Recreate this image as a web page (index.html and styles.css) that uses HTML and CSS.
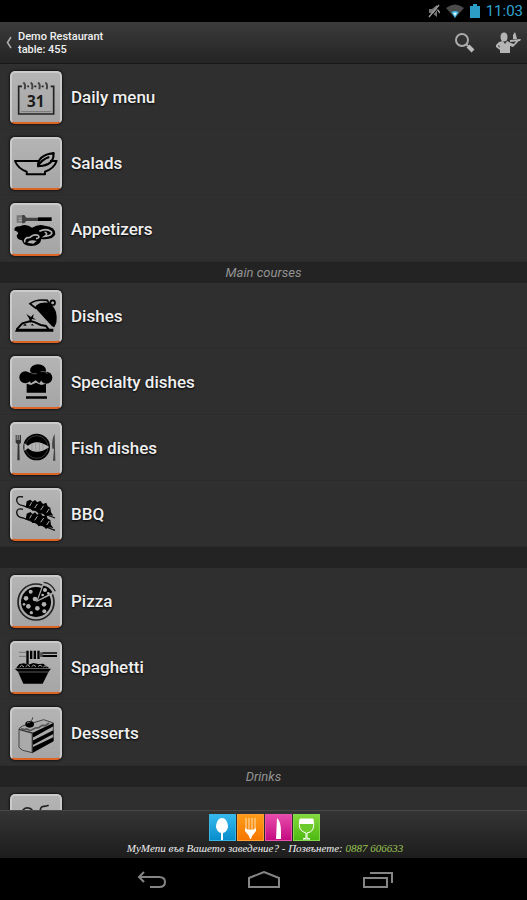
FILE: index.html
```html
<!DOCTYPE html>
<html lang="en">
<head>
<meta charset="utf-8">
<meta name="viewport" content="width=device-width, initial-scale=1">
<title>Demo Restaurant</title>
<link rel="stylesheet" href="styles.css">
</head>
<body>
<div class="status">
  <svg width="12" height="14" viewBox="0 0 12 14" aria-hidden="true"><path d="M1 5h3l5-4v12L4 9H1z" fill="#777"/><path d="M1 13L11 1M9 5l3 4" stroke="#999" stroke-width="1.5"/><path d="M2 14L12 2" stroke="#000"/></svg>
  <svg width="18" height="14" viewBox="0 0 18 14" aria-hidden="true"><path d="M0 4Q9-3 18 4L9 14z" fill="#4b4b4b"/><path d="M5.500 8Q9 6 12.500 8L9 14z" fill="#33b5e5"/><path d="M7 9Q9 8 11 9L9 12z" fill="#e0f6ff"/></svg>
  <svg width="10" height="14" viewBox="0 0 10 14" aria-hidden="true"><path d="M3 0h4v2h3v12H0V2h3z" fill="#2c9dc7"/></svg>
  <time class="clock">11:03</time>
</div>
<header class="bar">
  <a class="up" href="#">
    <svg width="6" height="13" viewBox="0 0 6 13" aria-hidden="true"><path d="M5 1L1.500 6.500L5 12" fill="none" stroke="#aaa" stroke-width="1.600"/></svg>
    <span class="title">Demo Restaurant<br>table: 455</span>
  </a>
  <button class="action" type="button" aria-label="Search">
    <svg width="22" height="22" viewBox="0 0 22 22"><circle cx="8" cy="8" r="6" fill="none" stroke="#aaa" stroke-width="2"/><path d="M12 12l2 2" stroke="#aaa" stroke-width="2"/><path d="M14 14l5 5" stroke="#bbb" stroke-width="4"/></svg>
  </button>
  <button class="action" type="button" aria-label="Call waiter">
    <svg width="26" height="24" viewBox="0 0 26 24" fill="#b5b5b5"><ellipse cx="9" cy="6" rx="3.500" ry="4.500"/><path d="M4 11L8 10L10 13L12 10L16 12L19 13L21 10L25 8L22 12L18 16L15 15L15 22H5V19L1 16L1 14zM4 14L3 15L5 17z" fill-rule="evenodd"/><path d="M15 9L26 8L25 10L15 11zM18 8V4L20 1L21 4L22 8z"/></svg>
  </button>
</header>
<main class="list">
  <a class="row" href="#"><span class="tile"><svg viewBox="0 0 156 156"><g fill="none" stroke="#222" stroke-width="5"><path d="M36 46H26V129H131V46H122M52 46h5M73 46h6M95 46h6" /><path d="M33 122H124" stroke="#777" stroke-width="3"/><path d="M40 35q8 5 4 20M62 35q8 5 4 20M84 35q8 5 4 20M106 35q8 5 4 20" stroke-width="6" stroke="#444"/></g><text class="date" x="77" y="108">31</text></svg></span>Daily menu</a>
  <a class="row" href="#"><span class="tile"><svg viewBox="0 0 156 156"><g fill="none" stroke="#000" stroke-width="6" stroke-linejoin="round"><path d="M86 72H15Q24 95 50 104V112H105V104Q132 95 140 72H120"/><path d="M84 88Q82 55 131 48Q132 82 98 86ZM84 88Q96 66 118 60"/></g></svg></span>Salads</a>
  <a class="row" href="#"><span class="tile"><svg viewBox="0 0 156 156"><path d="M20 37h18v7H26v3h12v4H26v3h12v5H20z" fill="#777"/><path d="M36 36h7l6 8h36v10H49l-6 7h-7z" fill="#444"/><path d="M84 43h41v11H84z"/><path d="M13 82Q13 68 30 70Q48 60 66 74Q86 62 104 68Q138 72 136 94Q128 112 94 108Q92 128 64 129Q40 130 36 112Q20 110 20 97Q32 90 13 82z"/><g fill="none" stroke="#b1b1b1" stroke-width="5"><path d="M44 118Q42 103 60 103Q70 92 84 97Q92 104 78 107M88 85Q108 74 124 86Q130 98 104 100Q116 92 104 87"/></g><path d="M52 119Q60 108 80 114L70 122z" fill="#b1b1b1"/></svg></span>Appetizers</a>
  <h2 class="section">Main courses</h2>
  <a class="row" href="#"><span class="tile"><svg viewBox="0 0 156 156"><path d="M15 125L19 116H130V125z"/><path d="M20 118L37 100L62 93L75 97L92 105L108 108L116 119" fill="none" stroke="#000" stroke-width="6"/><path d="M49 72l14 9l8-9l-2 11l9 6l-12-2l-4 13l-5-15zM38 106l8-5l4 7zM62 106l5-5l5 6z"/><path d="M60 41Q78 27 112 31L117 40Q82 40 76 54z" fill="#aaa" stroke="#000" stroke-width="5"/><path d="M76 54Q83 34 116 39Q145 55 139 98L133 112L126 109z"/><circle cx="128" cy="38" r="7" fill="#aaa" stroke="#000" stroke-width="5"/></svg></span>Dishes</a>
  <a class="row" href="#"><span class="tile"><svg viewBox="0 0 156 156"><circle cx="46" cy="64" r="18"/><ellipse cx="84" cy="43" rx="24" ry="18"/><circle cx="109" cy="65" r="18"/><path d="M46 50H110L88 82L77 73L63 82z"/><path d="M60 48Q66 56 80 53M92 47Q110 45 112 54" fill="none" stroke="#888" stroke-width="2"/><path d="M50 83L63 87L78 80L94 87L108 83V110H50zM48 121H111V128H48z"/></svg></span>Specialty dishes</a>
  <a class="row" href="#"><span class="tile"><svg viewBox="0 0 156 156"><circle cx="80" cy="75" r="40"/><circle cx="80" cy="75" r="34" fill="none" stroke="#555" stroke-width="2"/><path d="M43 64L54 71Q80 48 118 75Q80 102 54 79L43 87z" fill="#b4b4b4"/><path d="M66 65v20M77 61v28M88 62v26M99 66v18" stroke="#999" stroke-width="3"/><path d="M17 39h3v15h3V39h3v15h3V39h4v23l-5 5l1 48h-7l1-48l-6-5z" fill="#333"/><path d="M134 36q-10 16-7 44h5l-3 36h7z" fill="#444"/></svg></span>Fish dishes</a>
  <a class="row" href="#"><span class="tile"><svg viewBox="0 0 156 156"><g id="skewer"><path d="M39 27q-18-5-19 9q1 15 19 17L135 90" fill="none" stroke="#111" stroke-width="4"/><path d="M50 40l11-5l7 6l7-5l7 7l9-5l8 10l10-4l4 11l8 4l2 14l7 10l-15-2l-7 5l-11-11l-11 3l-9-11l-10 1l-6-9l-14-1z"/><path d="M65 43l-6 11M82 48l-8 12M101 53l-9 13M118 62l-8 12" stroke="#aaa" stroke-width="3"/></g><use href="#skewer" y="37"/></svg></span>BBQ</a>
  <h2 class="section"></h2>
  <a class="row" href="#"><span class="tile"><svg viewBox="0 0 156 156"><circle cx="78" cy="81" r="54" fill="none" stroke="#222" stroke-width="5"/><circle cx="78" cy="81" r="45"/><g fill="#b1b1b1"><circle cx="62" cy="50" r="6"/><circle cx="48" cy="70" r="7"/><circle cx="75" cy="72" r="7"/><circle cx="55" cy="94" r="7"/><circle cx="82" cy="100" r="7"/><circle cx="64" cy="113" r="5"/><circle cx="102" cy="88" r="7"/><circle cx="103" cy="109" r="6"/><circle cx="42" cy="88" r="4"/></g><path d="M78 82L98 26L136 54z" fill="#aaa"/><path d="M84 75L100 32Q118 34 127 52z"/><path d="M101 22Q124 24 136 49" fill="none" stroke="#222" stroke-width="4"/><circle cx="105" cy="45" r="6" fill="#bbb"/><circle cx="115" cy="55" r="4" fill="#bbb"/><circle cx="98" cy="60" r="4" fill="#bbb"/></svg></span>Pizza</a>
  <a class="row" href="#"><span class="tile"><svg viewBox="0 0 156 156"><path d="M27 34h22M27 46h22" stroke="#777" stroke-width="3"/><path d="M49 29h7v42h-7zM60 29h7v25h-7zM71 29h7v25h-7zM82 29h7v25h-7z"/><path d="M89 34h10v14H89z" fill="#555"/><path d="M98 34h43v4H98zM98 42h43v6H98z"/><path d="M18 82L28 69L42 67L55 71L70 66L85 69L100 68L118 82z"/><g fill="none" stroke="#aaa" stroke-width="3"><path d="M29 78l6-5l7 5M47 77l6-5l7 5M65 77l6-5l7 5M84 77l6-5l7 5M100 78l5-4l5 4"/></g><path d="M14 83H123L116 92L98 128H40L24 92z"/><path d="M24 93H116" stroke="#888" stroke-width="2"/></svg></span>Spaghetti</a>
  <a class="row" href="#"><span class="tile"><svg viewBox="0 0 156 156"><path d="M27 65L37 57L101 38L130 48V102L67 137L38 130L27 121z" fill="#aaa" stroke="#444" stroke-width="3"/><path d="M67 78L130 48V58L67 93zM67 101L130 70V81L67 115zM67 121L130 91V103L67 137z"/><path d="M27 67L67 78V137" fill="none" stroke="#333" stroke-width="4"/><path d="M33 65l10 3l8-2l9 5l16-8l10-1l10-7l10 1l11-8" fill="none" stroke="#555" stroke-width="5"/><ellipse cx="59" cy="52" rx="13" ry="10"/><path d="M60 44q9-5 8-13" fill="none" stroke="#444" stroke-width="3"/><path d="M51 49q3-5 8-3" fill="none" stroke="#999" stroke-width="3"/></svg></span>Desserts</a>
  <h2 class="section">Drinks</h2>
  <a class="row" href="#" aria-label="Drinks"><span class="tile"><svg viewBox="0 0 156 156"><g fill="none" stroke="#222" stroke-width="5"><path d="M36 53q8-16 23-10q10 5 12 15M91 54q-1-18 11-17q8 0 14-3"/></g></svg></span></a>
</main>
<footer class="promo">
  <div class="brand" aria-hidden="true">
    <span class="chip blue"><svg viewBox="0 0 27 27"><path d="M13 4C9 4 7 9 7 13q1 5 5 6v7h2v-7q4-1 5-6c0-4-2-9-6-9z" fill="#fff"/></svg></span>
    <span class="chip orange"><svg viewBox="0 0 27 27"><path d="M9 4v12h9V4M12 4v12M15 4v12" fill="none" stroke="#ffe2b8"/><path d="M8 14l3 2h5l3-2v3l-4 5-1 3h-1l-1-3-4-5z" fill="#fff"/></svg></span>
    <span class="chip pink"><svg viewBox="0 0 27 27"><path d="M12 4q4 3 4 14v7h-5z" fill="#fff"/></svg></span>
    <span class="chip green"><svg viewBox="0 0 27 27"><path d="M7 5h13q3 13-6 14v5l3 1h-7l3-1v-5Q4 17 7 5z" fill="#6ccb2b" stroke="#fff"/><path d="M7 5h13v5H6z" fill="#fff"/></svg></span>
  </div>
  <p class="note">MyMenu във Вашето заведение? - Позвънете: <a class="phone" href="tel:0887606633">0887 606633</a></p>
</footer>
<nav class="keys">
  <button class="key" type="button" aria-label="Back"><svg width="30" height="18" viewBox="0 0 30 18"><path d="M7 1L2 6L7 11M2 6H22Q28 6 28 11Q28 16 22 16H13"/></svg></button>
  <button class="key" type="button" aria-label="Home"><svg width="34" height="18" viewBox="0 0 34 18"><path d="M2 16V7L17 1L32 7V16z"/></svg></button>
  <button class="key" type="button" aria-label="Recent apps"><svg width="32" height="18" viewBox="0 0 32 18"><path d="M2 7H25V16H2zM8 2H30V12"/></svg></button>
</nav>
</body>
</html>
```
FILE: styles.css
```css
* { box-sizing: border-box; }

body {
  margin: 0;
  height: 100vh;
  display: flex;
  flex-direction: column;
  background: #000;
  color: #f0f0f0;
  font-family: Roboto, sans-serif;
}

a { color: inherit; text-decoration: none; }

button {
  padding: 0;
  border: 0;
  background: none;
  display: flex;
}

svg { display: block; }

.status {
  flex: none;
  height: 22px;
  padding: 0 4px;
  display: flex;
  align-items: center;
  justify-content: flex-end;
  gap: 6px;
}

.clock { font-size: 15px; color: #2fa5d1; }

.bar {
  flex: none;
  height: 42px;
  padding: 0 6px;
  display: flex;
  align-items: center;
  gap: 19px;
  background: linear-gradient(#3b3b3b, #242424);
  border-bottom: 1px solid #181818;
}

.up {
  flex: 1;
  display: flex;
  align-items: center;
  gap: 6px;
}

.title { font-size: 11px; font-weight: 500; line-height: 13px; }

.list {
  flex: 1;
  min-height: 0;
  overflow: hidden;
  background: #2f2f2f;
}

.row {
  height: 66px;
  padding: 0 10px;
  display: flex;
  align-items: center;
  gap: 9px;
  font-size: 17px;
  font-weight: 500;
  text-shadow: 0 1px 2px #000;
  border-top: 1px solid #303030;
  border-bottom: 1px solid #2c2c2c;
}

.tile {
  width: 52px;
  height: 53px;
  border: 2px solid #cbcbcb;
  border-bottom-color: #dc6425;
  border-radius: 5px;
  background: linear-gradient(#b4b4b4, #a5a5a5);
  box-shadow: 0 0 2px 1px #151515;
  text-shadow: none;
}

/* Drawings span the tile's border as well as its face. */
.tile svg { width: 52px; height: 52px; margin: -2px; }

.date {
  font: 700 46px "Open Sans", sans-serif;
  text-anchor: middle;
  fill: #1c1c1c;
}

.section {
  height: 21px;
  margin: 0;
  font-size: 13px;
  font-style: italic;
  font-weight: 400;
  line-height: 21px;
  text-align: center;
  color: #949494;
  background: #232323;
}

.promo {
  flex: none;
  height: 48px;
  padding-top: 3px;
  border-top: 1px solid #484848;
  background: linear-gradient(#343434, #1d1d1d);
}

.brand { display: flex; justify-content: center; gap: 1px; padding-left: 2px; }

.chip { width: 27px; height: 27px; border: 1px solid; }
.chip svg { margin: -1px; }
.blue { background: linear-gradient(#35b9ed, #078dcc); border-color: #37b4e2; }
.orange { background: linear-gradient(#ff9c18, #f67600); border-color: #ffa033; }
.pink { background: linear-gradient(#e84bac, #c40b80); border-color: #e553ad; }
.green { background: linear-gradient(#83d73a, #4eb913); border-color: #83d94a; }

.note {
  margin: 0;
  padding-left: 3px;
  font: italic 11px/15px "Liberation Serif", serif;
  text-align: center;
  white-space: nowrap;
}

.phone { color: #9bc452; }

.keys {
  flex: none;
  height: 42px;
  padding: 2px 93px 0 97px;
  display: flex;
  align-items: center;
  justify-content: space-around;
}

.key svg { fill: none; stroke: #858585; stroke-width: 2; }
```
